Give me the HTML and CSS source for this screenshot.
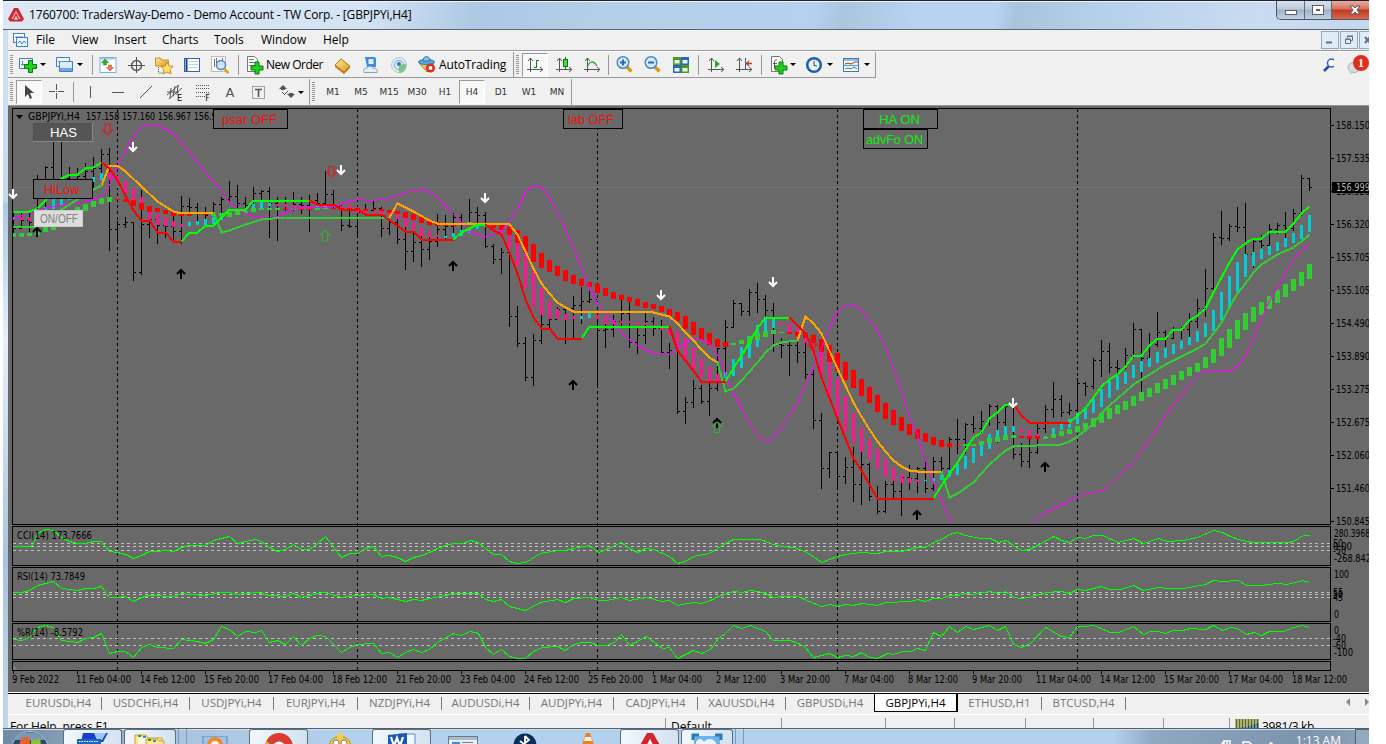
FILE: index.html
```
<!DOCTYPE html>
<html lang="en">
<head>
    <meta charset="UTF-8">
    <title>1760700: TradersWay-Demo - Demo Account - TW Corp. - [GBPJPYi,H4]</title>
    <link rel="stylesheet" href="styles.css">
</head>
<body>
    <svg class="defs" width="0" height="0">
        <defs>
            <g id="axes"><path d="M4.500 2v14M1 13.500h15M2 5l2.500-3L7 5M14 11l3 2.500-3 2.500" fill="none" stroke="#555"/></g>
            <g id="plus"><path d="M4 0h4v4h4v4H8v4H4V8H0V4h4z" fill="#1fd01f" stroke="#0a7a0a"/></g>
            <g id="sheet"><rect x=".5" y=".5" width="16" height="15" fill="#fff" stroke="#7fb0e4"/><rect x="1" y="1" width="15" height="1.500" fill="#9cc4f0"/></g>
            <linearGradient id="gold" x1="0" y1="0" x2="1" y2="1"><stop offset="0" stop-color="#ffe9a0"/><stop offset="1" stop-color="#d99a1c"/></linearGradient>
        </defs>
    </svg>

    <div class="screen">
        <div class="titlebar">
            <svg class="logo" width="16" height="14"><path d="M6 0h4l6 11-2 2.500H2L0 11z" fill="#d4232d"/><path d="M8 2.500l4.500 8.500h-9z" fill="#f2b8bc"/><path d="M8 5l3 6H5z" fill="#d4232d"/><path d="M8 8l2 3.500H6z" fill="#fff"/></svg>
            <span class="title-text">1760700: TradersWay-Demo - Demo Account - TW Corp. - [GBPJPYi,H4]</span>
            <div class="win-buttons">
                <span class="win min"><i></i></span>
                <span class="win max"><i></i></span>
                <span class="win close"><svg width="12" height="10"><path d="M1 1h3l2 2 2-2h3L8 5l3 4H8L6 7 4 9H1l3-4z" fill="#fff" stroke="#5a5560"/></svg></span>
            </div>
        </div>

        <div class="window">
            <div class="menubar">
                <svg class="menu-icon" width="16" height="15"><rect x=".5" y=".5" width="11" height="9" fill="#fff" stroke="#3f7fc8"/><rect x="3.500" y="4.500" width="11" height="9" fill="#eaf3ff" stroke="#3f7fc8"/><path d="M2 4h8M5 10l2-2 2 3 2-3 2 2" fill="none" stroke="#3f7fc8"/></svg>
                <span class="m-file">File</span><span class="m-view">View</span><span class="m-insert">Insert</span><span class="m-charts">Charts</span><span class="m-tools">Tools</span><span class="m-window">Window</span><span>Help</span>
                <div class="mdi-buttons">
                    <span><svg width="15" height="15"><path d="M4 10.500h6" stroke="#5c7084" stroke-width="2"/></svg></span>
                    <span><svg width="15" height="15"><path d="M6.500 6V4.500h5v4H10M4.500 7.500h5v4h-5zM4 7h6M6 4h6" fill="none" stroke="#5c7084"/></svg></span>
                    <span><svg width="15" height="15"><path d="M5 5l5 6M10 5l-5 6" stroke="#5c7084" stroke-width="2"/></svg></span>
                </div>
            </div>

            <div class="toolbars">
                <div class="toolrow">
                    <div class="group">
                        <i class="grip"></i>
                        <span class="drop"><svg width="20" height="20"><path d="M1.500 3.500h13v10h-13z" fill="#eef5ff" stroke="#3f7fc8"/><path d="M4.500 6v5M3 9.500h8" stroke="#789"/><use href="#plus" x="6.500" y="5.500"/></svg></span>
                        <span class="drop"><svg width="20" height="20"><path d="M1.500 2.500h13v9h-13z" fill="#eef5ff" stroke="#3f7fc8"/><path d="M4.500 6.500h13v10h-13z" fill="#dcebfc" stroke="#3f7fc8"/><path d="M5 14.500h12" stroke="#6fa4e0" stroke-width="3"/><path d="M3 6.500h9" stroke="#789"/></svg></span>
                        <i class="sep s4"></i>
                        <span class="tool"><svg width="18" height="18"><use href="#sheet" x=".5" y="1"/><path d="M6 3l3.500 3.500h-2V9h-3V6.500h-2z" fill="#2bb52b" stroke="#1a7a1a" stroke-width=".5"/><path d="M11 15l-3.500-3.500h2V9h3v2.500h2z" fill="#f07a4c" stroke="#b8401c" stroke-width=".5"/></svg></span>
                        <span class="tool"><svg width="18" height="18"><circle cx="9.500" cy="9.500" r="5" fill="none" stroke="#555" stroke-width="1.400"/><path d="M9.500 1v16M1 9.500h17" stroke="#555"/></svg></span>
                        <span class="tool"><svg width="20" height="20"><path d="M1.500 3h5l1 2h7v6h-13z" fill="url(#gold)" stroke="#c9962a"/><path d="M4.500 12v6h5" fill="none" stroke="#555" stroke-dasharray="1 1"/><path d="M13 7l2 4 4 .5-3 3 1 4.500-4-2-4 2 1-4.500-3-3 4-.5z" fill="#ffe16b" stroke="#c98a1a"/></svg></span>
                        <span class="tool"><svg width="18" height="18"><rect x="1.500" y="2.500" width="15" height="13" fill="#fff" stroke="#2a66b8"/><path d="M3.500 3v12" stroke="#1a3f8a" stroke-width="2"/><path d="M6 5.500h9M6 8.500h9M6 11.500h9" stroke="#bcd3ee"/></svg></span>
                        <span class="tool"><svg width="20" height="20"><path d="M1.500 1.500h14v15h-14z" fill="#fafafa" stroke="#bbb"/><path d="M4.500 4v8M6.500 3v8M9.500 5v6M12.500 3v8" stroke="#777"/><circle cx="11" cy="10" r="4.500" fill="#cfe6fa" fill-opacity=".85" stroke="#4a86c8" stroke-width="1.500"/><path d="M14 13.500l4.500 4.500" stroke="#d9a020" stroke-width="2.500"/></svg></span>
                        <i class="sep s8"></i>
                        <span class="tool labeled neworder"><svg width="20" height="20"><path d="M2.500 1.500h7l3 3v12h-10z" fill="#fff" stroke="#777"/><path d="M4 4.500h5M4 7.500h6M4 10.500h6" stroke="#777"/><use href="#plus" x="6" y="7"/></svg><b>New Order</b></span>
                        <span class="tool"><svg width="20" height="18"><path d="M2 9l6-6 9 7-6 6z" fill="url(#gold)" stroke="#b07a14"/><path d="M2 9v2l9 7 6-6v-2l-6 6z" fill="#b8801a"/></svg></span>
                        <span class="tool"><svg width="20" height="18"><path d="M4 1h9l2 1v9H6z" fill="#3a8ce0"/><path d="M7.500 3h5v5h-5z" fill="#d9edff"/><path d="M3 16.500c-1.500-3 1-5 3-4 1-3 5-3 6 0 3-1 5 2 4 4z" fill="#e6eef8" stroke="#8aa0bc"/></svg></span>
                        <span class="tool"><svg width="18" height="18"><circle cx="9" cy="9" r="7.500" fill="#dcecf4" stroke="#b4c8d4"/><circle cx="9" cy="9" r="4.500" fill="none" stroke="#7aa8c8"/><circle cx="9" cy="8" r="2" fill="#3878b8"/><path d="M9 9v8c5 0 8-4 7-9" fill="#49b449" fill-opacity=".6"/></svg></span>
                        <span class="tool labeled autotrade"><svg width="20" height="20"><path d="M2 8l8 9 7-9z" fill="#f0c24a" stroke="#b8861c"/><ellipse cx="9.500" cy="7" rx="8" ry="2.500" fill="#58a8dc" stroke="#2a78b0"/><path d="M6 6c0-6 7-6 7 0z" fill="#7cc0ec" stroke="#2a78b0"/><circle cx="13.500" cy="13" r="4.500" fill="#dc2d1c"/><rect x="11.800" y="11.300" width="3.400" height="3.400" fill="#fff"/></svg><b>AutoTrading</b></span>
                    </div>
                    <div class="group">
                        <i class="grip"></i>
                        <span class="tool pressed"><svg width="18" height="18"><use href="#axes"/><path d="M10.500 4v8M8 11.500h2.500M10.500 4.500H13" fill="none" stroke="#1a7a1a"/></svg></span>
                        <span class="tool"><svg width="18" height="18"><use href="#axes"/><path d="M10.500 1v12" stroke="#0a7a0a"/><rect x="8.500" y="3.500" width="4" height="7" fill="#3fdc3f" stroke="#0a7a0a"/></svg></span>
                        <span class="tool"><svg width="18" height="18"><use href="#axes"/><path d="M4 11c3-6 6-7 10-1" fill="none" stroke="#1a9a1a" stroke-width="1.200"/></svg></span>
                        <i class="sep s5"></i>
                        <span class="tool"><svg width="20" height="20"><path d="M11.500 11.500l5 5" stroke="#d4a010" stroke-width="3.500"/><circle cx="8" cy="7.500" r="5.800" fill="#d4ebfa" stroke="#4a8ac8" stroke-width="1.500"/><path d="M5 7.500h6M8 4.500v6" stroke="#2a6ab0" stroke-width="2"/></svg></span>
                        <span class="tool"><svg width="20" height="20"><path d="M11.500 11.500l5 5" stroke="#d4a010" stroke-width="3.500"/><circle cx="8" cy="7.500" r="5.800" fill="#d4ebfa" stroke="#4a8ac8" stroke-width="1.500"/><path d="M5 7.500h6" stroke="#2a6ab0" stroke-width="2"/></svg></span>
                        <span class="tool"><svg width="18" height="18"><path d="M1 1h8v8H1zM9 9h8v8H9z" fill="#4c9a1a"/><path d="M9 1h8v8H9zM1 9h8v8H1z" fill="#2a60c8"/><path d="M2.500 4h5v3.500h-5zM10.500 4h5v3.500h-5zM2.500 12h5v3.500h-5zM10.500 12h5v3.500h-5z" fill="#eef6ee"/></svg></span>
                        <i class="sep s7"></i>
                        <span class="tool"><svg width="18" height="18"><use href="#axes"/><path d="M8 4l5 4-5 4z" fill="#1fae1f"/></svg></span>
                        <span class="tool"><svg width="18" height="18"><use href="#axes"/><path d="M10.500 2v11" stroke="#2a60a8"/><path d="M17 7.500h-5M14 5l-2.500 2.500L14 10" fill="none" stroke="#c0391a" stroke-width="1.300"/></svg></span>
                        <i class="sep s6"></i>
                        <span class="drop wide"><svg width="20" height="20"><path d="M3.500 1.500h8l3 3v12h-11z" fill="#fff" stroke="#777"/><path d="M9 5c-2-1-2.500 1-2.500 3v5M5 8.500h4" fill="none" stroke="#555"/><use href="#plus" x="7" y="7"/></svg></span>
                        <span class="drop wide"><svg width="18" height="18"><circle cx="9" cy="9" r="6.800" fill="#eaf4ff" stroke="#1a62b8" stroke-width="2.600"/><path d="M9 5v4.500l3 .5" fill="none" stroke="#345"/></svg></span>
                        <span class="drop wide"><svg width="18" height="18"><rect x="1.500" y="2.500" width="15" height="13" fill="#fff" stroke="#3a76bc"/><path d="M2 4h14M2 9.500h14" stroke="#6ea4dc" stroke-width="1.500"/><path d="M3 8l3-1 3 1 4-2h3" fill="none" stroke="#a03020"/><path d="M3 13l3-1 3 1 3-2 3 2" fill="none" stroke="#2a8a2a"/></svg></span>
                    </div>
                    <div class="corner">
                        <svg width="14" height="14"><path d="M6 8l-5 5" stroke="#2048b0" stroke-width="2.500"/><circle cx="8.500" cy="5" r="4" fill="#fff" stroke="#2c5fd0" stroke-width="1.500"/></svg>
                        <span class="chat"><svg width="22" height="20"><ellipse cx="7" cy="12.500" rx="6" ry="5" fill="#ddd" stroke="#aaa"/><path d="M3 16v3.500l4-2.500z" fill="#ccc"/><circle cx="14" cy="8" r="8" fill="#df2f1c"/></svg><em>1</em></span>
                    </div>
                </div>
                <div class="toolrow second">
                    <div class="group">
                        <i class="grip"></i>
                        <span class="tool pressed cursor"><svg width="14" height="18"><path d="M3 2v12l3-3 2 5 2-1-2-5h4z" fill="#444"/></svg></span>
                        <span class="tool narrow"><svg width="18" height="18"><path d="M8.500 1v6M8.500 10v6M1 8.500h6M10 8.500h6" stroke="#555"/><path d="M8 8h1v1H8z" fill="#555"/></svg></span>
                        <i class="sep s6"></i>
                        <span class="tool"><svg width="18" height="18"><path d="M9.500 3v12" stroke="#555"/></svg></span>
                        <span class="tool"><svg width="18" height="18"><path d="M3 9.500h12" stroke="#555"/></svg></span>
                        <span class="tool"><svg width="18" height="18"><path d="M3 15L15 3" stroke="#555"/></svg></span>
                        <span class="tool"><svg width="18" height="18"><path d="M1 12L13 2M3 16L16 5M5 5L4 15M9 3L7 13M12 2l-1 10M1 9h12" stroke="#555"/></svg><sub>E</sub></span>
                        <span class="tool"><svg width="18" height="18"><path d="M2 2.500h14M2 5.500h14M2 9.500h14M2 13.500h9" stroke="#555" stroke-dasharray="1 1"/></svg><sub>F</sub></span>
                        <span class="tool letter">A</span>
                        <span class="tool"><svg width="18" height="18"><rect x="3.500" y="3.500" width="12" height="12" fill="none" stroke="#555" stroke-dasharray="1 1"/><path d="M6 6.500h7M9.500 6v8" stroke="#555" stroke-width="1.600"/></svg></span>
                        <span class="drop last"><svg width="18" height="18"><path d="M5 2l4 4-2 0v1H3V6H1zM13 15l-4-4h2v-1h4v1h2z" fill="#555"/><path d="M4 9l3 3M6 12l4-4" stroke="#555"/></svg></span>
                    </div>
                    <div class="group frames">
                        <i class="grip"></i>
                        <span>M1</span><span>M5</span><span>M15</span><span>M30</span><span>H1</span><span class="pressed">H4</span><span>D1</span><span>W1</span><span>MN</span>
                    </div>
                </div>
            </div>

            <svg id="chart" class="chart" viewBox="8 105 1361 587" width="1361" height="587"></svg>

            <div class="tabs">
                <span class="t93">EURUSDi,H4</span><span class="t88">USDCHFi,H4</span><span>USDJPYi,H4</span><span>EURJPYi,H4</span><span>NZDJPYi,H4</span><span class="t88">AUDUSDi,H4</span><span>AUDJPYi,H4</span><span>CADJPYi,H4</span><span class="t88">XAUUSDi,H4</span><span class="t88 before">GBPUSDi,H4</span><span class="active">GBPJPYi,H4</span><span>ETHUSD,H1</span><span>BTCUSD,H4</span>
                <div class="tab-arrows"><i class="left"></i><i class="right"></i></div>
            </div>

            <div class="status">
                <span class="help">For Help, press F1</span>
                <span class="profile">Default</span>
                <span class="c104"></span><span class="c69"></span><span class="c71"></span><span class="c68"></span><span class="c70"></span><span class="c66"></span>
                <span class="traffic"><svg width="24" height="12"><path d="M1.500 0v10M4.500 0v9M7.500 0v8M10.500 0v8M13.500 0v7M16.500 0v6M19.500 0v5M22.500 0v4" stroke="#5f7010" stroke-width="2"/><path d="M7.500 8v4M10.500 8v4M13.500 7v5M16.500 6v6M19.500 5v7M22.500 4v8" stroke="#10405c" stroke-width="2"/></svg>3981/3 kb</span>
            </div>
        </div>

        <div class="taskbar">
            <div class="start"><svg width="44" height="16"><circle cx="22" cy="21" r="18.500" fill="#2c4a68" stroke="#a8c4dc"/><path d="M7 11c5-10 25-10 30 0z" fill="#7c98b0"/><path d="M13 10c4-3 7-2 9 0v6H11z" fill="#e8602c"/><path d="M23 10c3 2 6 1 9-1l1 7H23z" fill="#8cc03c"/></svg></div>
            <div class="task open w59"><svg width="34" height="12"><path d="M7 0h25l-5 9H5z" fill="#1a3fd0"/><path d="M18 0h12l-4 7h-5z" fill="#9cc8ff"/><rect x="1" y="6" width="24" height="8" fill="#1a66c0"/><path d="M3 8.500h20M3 11.500h20" stroke="#fff" stroke-dasharray="1.500 1"/></svg></div>
            <div class="task open w52"><svg width="34" height="12"><path d="M2 2h11l2 3h14v9H2z" fill="#ffe690" stroke="#caa030"/><path d="M5 4h9v8H5z" fill="#fffbe0"/><path d="M13 6h11l2 2h5v6H13z" fill="#ffe690" stroke="#caa030"/><path d="M5 3h3M15 7h3" stroke="#2a9a2a" stroke-width="2"/><path d="M10 4h3M20 8h3" stroke="#3a86d8" stroke-width="2"/></svg></div>
            <div class="task stack"></div>
            <div class="task w66 low"><svg width="28" height="8"><rect x="1" y="0" width="24" height="12" fill="#9cc4e8" stroke="#5a8ab8"/><circle cx="13" cy="9" r="8" fill="#f08a2c"/><circle cx="13" cy="9" r="4" fill="#fff"/></svg></div>
            <div class="task open w59"><svg width="32" height="12"><circle cx="16" cy="15" r="14" fill="#f2c41c"/><path d="M2 14A14 14 0 0 1 30 14H16L9 15 4 8z" fill="#dc3c30"/><path d="M2 15l5-6 6 6z" fill="#30a050"/><circle cx="16" cy="15" r="6.500" fill="#fff"/></svg></div>
            <div class="task w65"><svg width="26" height="12"><path d="M2 14c0-14 22-14 22 0z" fill="#f0c83c" stroke="#b88a1c"/><circle cx="13" cy="3" r="3" fill="#f4d04c"/><circle cx="9" cy="10" r="3" fill="#fff" stroke="#876"/><circle cx="17" cy="10" r="3" fill="#fff" stroke="#876"/><path d="M11 11h4l-2 2z" fill="#d86020"/></svg></div>
            <div class="task open w59"><svg width="32" height="12"><path d="M13 1h16v13H13z" fill="#f4f9ff" stroke="#5a8cc8"/><path d="M2 2l19-2v14H2z" fill="#1a58b8"/><path d="M5 4l3 9 3-8 3 8 3-9" fill="none" stroke="#fff" stroke-width="2.200"/></svg></div>
            <div class="task w65 low"><svg width="30" height="10"><rect x=".5" y=".5" width="29" height="12" fill="#e8eef4" stroke="#6a7a8a"/><path d="M1 2.500h28" stroke="#a8bccc" stroke-width="3"/><path d="M4 6h8v4H4z" fill="#4a8ac8"/><path d="M14 6.500h11M14 9.500h11" stroke="#778"/></svg></div>
            <div class="task w60"><svg width="24" height="12"><circle cx="12" cy="12" r="11.500" fill="#0a2c5c"/><path d="M7 8l9 7M12 3v11M12 3l4 4-9 7" fill="none" stroke="#fff" stroke-width="1.800"/></svg></div>
            <div class="task w64"><svg width="16" height="12"><path d="M6 0h4l4 12H2z" fill="#f08018"/><path d="M5 4h6l1 4H4z" fill="#f4f4f4"/></svg></div>
            <div class="task open w59"><svg width="24" height="12"><path d="M9 0h6l8 14h-7l-4-8-4 8H1z" fill="#d4232d"/><path d="M12 6l4 8H8z" fill="#fff"/></svg></div>
            <div class="task open w52"><svg width="32" height="12"><rect x="3" y="3" width="26" height="12" fill="#6cb4f0"/><path d="M5 9c3-5 7-3 8 0 4-5 10-3 12 1v4H5z" fill="#e8f4ff"/><path d="M2 7V2h6M24 2h6v5" fill="none" stroke="#2a7ab8" stroke-width="3"/></svg></div>
            <div class="task stack"></div>
            <div class="tray"><svg width="60" height="9"><path d="M3 8l4-6h6v6M7 3v6M10 3v6M26 3h6l3 3h7v3H27z" fill="none" stroke="#fff" stroke-width="1.500"/><path d="M54 3v6M52 5h4" stroke="#fff" stroke-width="1.500"/></svg><span>1:13 AM</span><i></i></div>
        </div>
    </div>
    <script src="script.js"></script>
</body>
</html>
```
FILE: styles.css
```
body {
    margin: 0;
    background: #fff;
    font-family: 'Open Sans', 'Noto Sans', sans-serif;
    font-size: 12px;
    color: #000;
}
.defs {
    position: absolute;
}
.screen {
    width: 1366px;
    height: 744px;
    margin-left: 3px;
    overflow: hidden;
    background: linear-gradient(#cfe0f1 0, #cfe0f1 90px, #c3d8ee 200px, #a9cbea 205px, #e8f0f8 340px, #a8c4e0 560px, #c4d8ec 100%);
}
.titlebar {
    display: flex;
    box-sizing: border-box;
    height: 30px;
    border-top: 1px solid #1c2330;
    border-bottom: 1px solid #5c6670;
    background: linear-gradient(100deg, #dce8f4 0, #d3e3f3 360px, #adc8e4 470px, #b3cfea 600px, #b5d1ed 800px, #a9c5e0 830px, #b7d3ef 900px, #b7d3ef 980px, #a8c3de 1000px, #b5d0eb 1080px, #c9dbf0 1240px, #c4d8ee 100%);
    box-shadow: inset 0 1px #eef5fc;
}
.logo {
    margin: 7px 5px 0;
}
.title-text {
    line-height: 28px;
    letter-spacing: -.155px;
    white-space: nowrap;
}
.win-buttons {
    display: flex;
    box-sizing: border-box;
    width: 93px;
    height: 19px;
    margin-left: auto;
    border: solid #47566a;
    border-width: 0 0 1px 1px;
    border-radius: 0 0 0 5px;
    overflow: hidden;
}
.win {
    display: flex;
    box-sizing: border-box;
    flex: none;
    width: 28px;
    align-items: center;
    justify-content: center;
    border-right: 1px solid #5c6b80;
    background: linear-gradient(#d8e2ee, #bccad9 45%, #9fb0c3 50%, #c2d2e2);
}
.win.max {
    width: 27px;
}
.win.close {
    width: 46px;
    border: 0;
    background: linear-gradient(#e8aca0, #d5705c 45%, #bd3a22 50%, #d8684c);
}
.win.min i {
    width: 10px;
    height: 3px;
    margin-top: 5px;
    border: 1px solid #5a5f70;
    background: #fff;
}
.win.max i {
    width: 4px;
    height: 2px;
    border: 3px solid #fff;
    outline: 1px solid #5a5f70;
    background: #5a5f70;
}
.window {
    width: 1361px;
    margin-left: 5px;
    background: #f0f0f0;
}
.menubar {
    display: flex;
    box-sizing: border-box;
    height: 21px;
    border-bottom: 1px solid #999;
    line-height: 20px;
}
.menu-icon {
    margin: 3px 7px 0 5px;
}
.m-file { width: 36px; }
.m-view { width: 42px; }
.m-insert { width: 48px; }
.m-charts { width: 52px; }
.m-tools { width: 47px; }
.m-window { width: 62px; }
.mdi-buttons {
    display: flex;
    gap: 1px;
    width: 48px;
    margin: 1px 0 0 auto;
    overflow: hidden;
}
.mdi-buttons span {
    flex: none;
    width: 16px;
    height: 16px;
    border: 1px solid #93a7bb;
    background: #dfebf7;
    line-height: 0;
}
.toolbars {
    height: 54px;
    border-top: 1px solid #fff;
    box-sizing: border-box;
}
.toolrow {
    display: flex;
    height: 27px;
}
.toolrow.second {
    height: 26px;
}
.group {
    display: flex;
    align-items: center;
    box-sizing: border-box;
    height: 26px;
    border-right: 1px solid #999;
    border-bottom: 1px solid #999;
}
.second .group {
    border-bottom: 0;
}
.grip {
    width: 3px;
    height: 20px;
    margin: 0 3px 0 2px;
    background: repeating-linear-gradient(#999 0, #999 1px, #f0f0f0 1px, #f0f0f0 2px);
}
.tool, .drop, .frames span {
    display: flex;
    box-sizing: border-box;
    width: 28px;
    height: 24px;
    align-items: center;
    justify-content: center;
}
.tool.narrow {
    width: 26px;
}
.tool.pressed, .frames .pressed {
    width: 26px;
    margin-right: 2px;
    border: 1px solid #999;
    border-right-color: #fff;
    border-bottom-color: #fff;
    background: #f8f8f8;
}
.tool sub {
    margin: 12px 0 0 -7px;
    font: 8px 'DejaVu Sans', sans-serif;
}
.tool.letter {
    color: #555;
    font: 13px 'DejaVu Sans', sans-serif;
}
.labeled {
    justify-content: flex-start;
}
.labeled b {
    font-weight: normal;
    white-space: nowrap;
}
.neworder {
    width: 87px;
    padding-left: 3px;
    letter-spacing: -.5px;
}
.autotrade {
    width: 100px;
    padding-left: 4px;
    letter-spacing: -.15px;
}
.autotrade svg, .neworder svg {
    flex: none;
    margin-right: 1px;
}
.autotrade svg {
    margin-right: 2px;
}
.drop {
    width: 37px;
    padding-left: 2px;
    justify-content: flex-start;
}
.drop.wide {
    padding-left: 4px;
}
.drop.wide svg {
    width: 20px;
}
.drop.last {
    padding-left: 6px;
}
.drop::after {
    content: '';
    margin-left: 2px;
    border: 3px solid transparent;
    border-top-color: #000;
    border-bottom: 0;
}
.sep {
    height: 20px;
    background: linear-gradient(#999, #999) center / 1px 100% no-repeat;
}
.s4 { width: 4px; }
.s5 { width: 5px; }
.s6 { width: 6px; }
.s7 { width: 7px; }
.s8 { width: 8px; }
.frames {
    color: #333;
    font: 9px 'DejaVu Sans', sans-serif;
}
.frames .grip {
    margin-right: 4px;
}
.corner {
    display: flex;
    gap: 12px;
    width: 46px;
    margin: 6px 0 0 auto;
}
.chat {
    position: relative;
    flex: none;
    margin: -3px 0 0 1px;
}
.chat em {
    position: absolute;
    left: 11px;
    top: 1px;
    color: #fff;
    font: bold 12px 'Liberation Serif', serif;
}
.chart {
    display: block;
    background: #696969;
    box-shadow: inset 0 1px #999;
    font-family: 'DejaVu Sans Condensed', 'DejaVu Sans', sans-serif;
    font-size: 10px;
}
.chart .button-text {
    font-family: 'Liberation Sans', sans-serif;
}
.tabs {
    display: flex;
    box-sizing: border-box;
    height: 22px;
    padding-left: 1px;
    border-top: 1px solid #fff;
    box-shadow: inset 0 1px #000;
    color: #777;
}
.tabs > span {
    box-sizing: border-box;
    flex: none;
    width: 84px;
    height: 13px;
    margin-top: 4px;
    border-right: 1px solid #777;
    line-height: 12px;
    text-align: center;
    font-size: 11.500px;
}
.tabs > .t93 {
    width: 93px;
    padding-left: 7px;
}
.tabs > .t88 { width: 88px; }
.tabs > .before {
    border: 0;
}
.tabs > .active {
    height: 19px;
    margin-top: 0;
    padding-top: 3px;
    border: 1px solid #000;
    border-right-width: 2px;
    background: #fff;
    color: #000;
}
.tab-arrows {
    display: flex;
    gap: 15px;
    align-items: flex-start;
    margin: 5px 0 0 auto;
}
.tab-arrows i {
    border: 4px solid transparent;
}
.tab-arrows .left {
    border-left: 0;
    border-right-color: #888;
}
.tab-arrows .right {
    border-right: 0;
    border-left-color: #888;
}
.status {
    display: flex;
    height: 13px;
    border-top: 1px solid #fff;
    overflow: hidden;
    line-height: 24px;
}
.status span {
    box-sizing: border-box;
    height: 24px;
    background: linear-gradient(#999, #999) right 3px / 1px 100% no-repeat;
}
.status .help {
    width: 658px;
    padding-left: 2px;
    letter-spacing: -.1px;
}
.status .profile { width: 116px; padding-left: 5px; }
.status .c104 { width: 104px; }
.status .c69 { width: 69px; }
.status .c71 { width: 71px; }
.status .c68 { width: 68px; }
.status .c70 { width: 70px; }
.status .c66 { width: 66px; }
.status .traffic {
    display: flex;
    gap: 3px;
    padding-left: 5px;
    background: none;
    letter-spacing: -.4px;
}
.traffic svg {
    margin-top: 4px;
}
.taskbar {
    display: flex;
    box-sizing: border-box;
    height: 16px;
    border-top: 1px solid #52606e;
    background: linear-gradient(90deg, #6f8aa3 0, #859db3 60px, #a9c4de 180px, #b3d0ec 340px, #b3d0ec 1110px, #8fa9c2 1150px, #7b93ab 1300px, #8ba2b8 100%);
    box-shadow: inset 0 1px #cfe0f0;
}
.start {
    width: 60px;
    padding-left: 5px;
    box-sizing: border-box;
}
.task {
    display: flex;
    box-sizing: border-box;
    flex: none;
    height: 16px;
    margin-right: 2px;
    justify-content: center;
    padding-top: 4px;
}
.task.low {
    padding-top: 7px;
}
.task.open {
    padding-top: 3px;
    border: 1px solid #5a7088;
    border-bottom: 0;
    border-radius: 3px 3px 0 0;
    background: linear-gradient(90deg, #f2f7fc, #d3e2f0);
}
.task.stack {
    width: 9px;
    border: solid #8098b0;
    border-width: 0 1px;
}
.w52 { width: 52px; }
.w59 { width: 59px; }
.w60 { width: 60px; }
.w64 { width: 61px; }
.w65 { width: 60px; }
.w66 { width: 58px; padding-right: 4px; }
.tray {
    display: flex;
    gap: 19px;
    margin-left: auto;
    padding-top: 4px;
    color: #fff;
    line-height: 15px;
    white-space: nowrap;
}
.tray svg {
    margin-top: 6px;
}
.tray i {
    width: 13px;
    height: 16px;
    margin: -4px 0 0 -5px;
    border: 1px solid #4f6478;
    border-right: 0;
    background: #93a9be;
}
```
FILE: script.js
```
const NS = 'http://www.w3.org/2000/svg';
const chart = document.getElementById('chart');
const STEP = 8;
const FIRST = 13;

function el(name, attrs, text) {
    const node = document.createElementNS(NS, name);
    for (const key in attrs) node.setAttribute(key, attrs[key]);
    if (text !== undefined) node.textContent = text;
    chart.appendChild(node);
    return node;
}
function rect(x, y, w, h, fill) {
    el('rect', { x: x, y: y, width: w, height: h, fill: fill, 'shape-rendering': 'crispEdges' });
}
function frame(x, y, w, h, fill, stroke) {
    el('rect', { x: x + .5, y: y + .5, width: w, height: h, fill: fill, stroke: stroke, 'shape-rendering': 'crispEdges' });
}
function line(points, color, width) {
    el('polyline', { points: points, fill: 'none', stroke: color, 'stroke-width': width, 'shape-rendering': 'crispEdges', transform: 'translate(.5 .5)' });
}
function dashed(d, color) {
    el('path', { d: d, stroke: color, 'stroke-dasharray': '3 3', 'shape-rendering': 'crispEdges' });
}
function text(x, y, value, fill, width, cls, size) {
    const attrs = { x: x, y: y, fill: fill };
    if (width) { attrs.textLength = width; attrs.lengthAdjust = 'spacingAndGlyphs'; }
    if (cls) attrs.class = cls;
    if (size) attrs['font-size'] = size;
    el('text', attrs, value);
}

// high low close
const bars = `213 232 228,213 228 220,213 231 222,175 223 195,166 210 167,141 208 180,141 205 178,167 187 175,168 190 176,163 185 171,
157 187 168,149 178 154,148 250 229,221 240 224,217 227 222,222 280 272,190 274 224,207 237 219,217 243 225,222 237 226,
213 242 231,196 243 206,198 215 207,203 220 213,207 222 215,202 215 204,197 213 199,181 200 196,185 210 203,197 213 205,
187 210 193,190 203 191,187 237 203,197 240 200,197 210 200,192 210 204,197 213 205,195 231 200,193 208 203,171 208 194,
190 207 206,205 230 225,208 227 226,210 237 212,204 215 210,200 212 208,207 236 228,215 234 222,217 243 239,222 269 251,
231 261 242,228 266 249,233 259 241,214 246 229,215 239 226,213 235 217,214 230 224,199 223 212,207 227 215,212 247 246,
244 263 259,248 273 252,252 326 316,306 346 343,337 380 377,334 385 340,302 343 324,313 327 319,307 317 309,308 343 308,
296 337 305,287 323 301,291 302 299,320 385 330,323 347 329,315 336 321,299 327 313,302 347 342,326 353 335,313 343 321,
317 335 328,320 353 352,343 368 350,350 413 411,397 423 402,380 407 388,385 403 401,383 415 388,348 390 348,320 372 327,
300 327 303,303 315 311,289 315 292,283 312 299,295 315 310,303 351 344,338 357 345,342 375 345,342 362 352,343 378 374,
370 428 420,413 488 468,452 477 452,452 487 476,457 483 467,447 501 484,452 504 464,463 500 496,486 513 511,481 512 484,
481 498 491,477 515 477,465 489 478,467 492 468,460 492 488,457 490 461,457 470 468,437 470 439,419 453 439,423 453 424,
416 432 428,411 433 421,404 425 406,405 442 422,407 425 406,405 458 454,443 466 461,437 467 452,422 453 428,405 432 409,
382 417 399,395 416 412,403 414 410,378 411 383,382 395 386,358 388 360,340 376 351,343 372 367,360 373 368,348 368 355,
323 357 329,329 393 358,333 360 344,312 346 332,330 346 338,327 338 330,327 338 329,313 337 321,299 327 308,269 316 288,
233 290 237,211 244 238,224 240 226,207 231 227,203 255 254,240 267 241,235 247 245,224 246 229,223 233 225,212 237 228,
209 230 213,175 215 178,178 190 187`;

// thin bodies: top bottom, c = rising, p = falling
const thin = `c217 219,p217 220,p217 221,c215 218,c207 211,c198 209,c197 205,c185 200,c183 195,c180 190,c177 182,c173 180,p172 180,p176 184,p181 193,
p188 200,p197 210,p209 222,p214 225,p217 226,p221 227,p224 227,c222 226,c221 225,c219 225,c217 224,c215 220,c212 215,c209 213,c209 212,
c204 209,c202 208,c203 206,p204 206,p204 207,p205 210,p206 209,p206 210,c206 208,c205 207,p205 207,p206 209,p205 208,p207 213,p209 213,
p211 213,p210 215,p213 216,p213 219,p217 227,p222 230,p227 236,p231 237,p235 237,c236 238,c233 237,c230 236,c228 233,c224 229,c223 227,
p224 227,p227 234,p232 248,p243 266,p253 288,p268 307,p288 315,p301 319,p309 319,p314 320,p316 319,c316 319,c312 318,p315 319,p317 324,
p320 324,p321 323,p321 323,p322 325,p323 325,p325 327,p327 330,p328 335,p331 348,p338 359,p348 371,p359 377,p367 381,p374 381,c372 378,
c359 376,c347 368,c343 358,c325 347,c319 333,c319 328,p323 325,p323 332,p328 337,p335 343,p345 355,p352 375,p362 396,p378 416,p396 431,
p413 443,p428 452,p439 459,p449 469,p459 477,p467 481,p474 483,p478 483,p480 482,c480 481,c478 481,c475 480,c470 477,c464 475,c456 469,
c448 463,c445 456,c434 449,c430 442,c426 435,c426 432,p429 433,p430 437,p434 437,c436 438,c428 435,c423 430,c419 428,c413 424,c407 419,
c399 413,c389 407,c381 398,c376 390,c372 384,c365 378,c361 372,c358 367,c352 363,c348 358,c344 354,c341 349,c337 345,c331 342,c323 337,
c310 331,c292 320,c276 307,c262 292,c254 277,c252 266,c249 259,c246 255,c242 251,c238 247,c233 243,c225 239,c215 232`;

// wide bodies: top bottom, g = rising, r = falling
const wide = `g233 237,g233 237,g233 236,g230 235,g227 232,g222 230,g217 225,g213 222,g207 213,g204 211,g201 207,g198 204,g197 202,r199 200,r199 202,
r200 206,r203 210,r206 212,r208 212,r210 214,r212 216,r213 216,r214 216,r213 214,r214 215,g214 216,g213 216,g212 217,g211 215,g211 213,
g208 212,g208 210,g208 210,g208 210,r209 210,g208 210,r209 210,r209 210,g207 210,g207 209,r208 209,r208 210,r208 209,r208 210,r209 211,
r209 210,r209 211,r210 213,r211 214,r212 218,r214 220,r217 223,r220 225,r222 226,r223 226,r223 226,g223 225,g222 225,g223 225,r223 226,
r224 228,r225 230,r227 235,r230 243,r236 252,r244 262,r253 268,r260 272,r266 276,r270 281,r275 284,r279 286,r282 287,r284 293,r288 296,
r292 299,r295 300,r297 302,r299 306,r302 308,r304 309,r306 312,r309 316,r312 321,r316 329,r322 335,r328 340,r333 345,r339 347,r342 347,
g343 345,g340 344,g336 344,g333 340,g331 337,g330 334,g332 333,r332 334,r332 336,r333 338,r335 343,r339 352,r345 362,r353 371,r362 380,
r370 388,r379 396,r387 403,r395 412,r403 419,r410 425,r417 431,r424 435,r429 439,r433 442,r437 445,r440 447,r443 447,r445 446,g444 446,
g444 446,g441 445,g438 443,g437 442,g435 440,g435 438,r436 438,r436 439,r436 439,g437 439,g434 438,g431 436,g429 434,g426 432,g423 430,
g418 427,g413 423,g408 419,g405 414,g401 410,g396 406,g392 401,g388 397,g383 393,g379 389,g375 385,g371 380,g367 376,g363 372,g357 368,
g349 363,g338 356,g329 348,g320 339,g313 330,g307 322,g302 315,g296 309,g290 303,g284 297,g279 291,g272 286,g264 279`;

const LIME = '#00ff00', RED = '#ff0000', GREEN = '#32cd32', ORANGE = '#ffa500', MAGENTA = '#ff00ff';

// period separators and the current price
dashed('M117.5 109V670M357.5 109V670M597.5 109V670M837.5 109V670M1077.5 109V670', '#000');
rect(13, 187, 1318, 1, '#6a7580');

let prev = null;
bars.split(',').forEach(function (row, i) {
    const [high, low, close] = row.trim().split(' ').map(Number);
    const x = FIRST + i * STEP;
    rect(x, high, 1, low - high + 1, '#000');
    if (prev !== null) rect(x - 2, prev, 2, 1, '#000');
    rect(x + 1, close, 2, 1, '#000');
    prev = close;
});

function bodies(data, half, colors) {
    data.split(',').forEach(function (row, i) {
        row = row.trim();
        const [top, bottom] = row.slice(1).split(' ').map(Number);
        const x = Math.max(FIRST, FIRST + i * STEP - half);
        rect(x, top, FIRST + i * STEP + half + 1 - x, bottom - top, colors[row[0]]);
    });
}
bodies(thin, 1, { c: '#00ced1', p: '#ff1493' });
bodies(wide, 2, { g: GREEN, r: RED });

line('13,219 21,215 37,209 85,201 101,197 109,185 117,167 125,150 133,136 141,127 149,124 157,125 173,133 189,152 205,172 221,190 229,202 237,208 245,213 253,216 269,218 277,216 293,208 301,207 325,207 333,206 341,203 349,201 357,199 373,200 389,198 405,192 421,189 429,191 437,197 453,214 469,231 477,235 485,236 493,234 501,230 509,221 517,208 525,192 533,185 541,187 549,197 565,228 581,267 589,287 597,303 613,322 621,333 637,345 653,353 669,354 677,349 685,342 693,338 701,339 709,343 717,354 725,373 733,392 741,408 749,423 757,435 765,442 773,437 781,427 789,415 797,402 805,385 813,367 821,348 829,327 837,311 845,305 853,304 861,310 869,319 877,330 885,347 893,367 901,390 909,415 917,435 925,460 933,482 941,500 949,518 952,523', MAGENTA, 1);
line('1033,523 1037,517 1045,512 1053,508 1069,500 1085,493 1101,491 1109,485 1125,469 1133,462 1141,450 1157,427 1173,405 1189,384 1197,376 1205,370 1221,371 1229,370 1237,366 1245,355 1253,338 1261,318 1269,300 1277,287 1285,273 1293,259 1301,250 1309,243', MAGENTA, 1);

line('13,227 37,226 45,222 53,215 61,209 77,199 93,189 101,185', GREEN, 2);
line('101,185 109,165 117,165 125,171 141,186 157,201 173,211 181,213 213,212', ORANGE, 2);
line('213,212 221,232 229,230 245,224 261,219 285,217 389,217', GREEN, 2);
line('389,217 397,203 413,211 429,220 437,223 453,223 501,223 509,224 517,234 533,268 541,283 549,293 557,302 565,307 573,311 621,311 653,312 669,316 677,323 685,332 693,340 701,349 709,357 717,362', ORANGE, 2);
line('717,362 725,391 733,388 741,380 757,362 765,352 773,345 781,342 797,340', GREEN, 2);
line('797,340 805,316 813,323 821,333 837,368 845,385 853,402 861,416 869,429 877,441 885,451 893,460 901,466 909,470 917,471 941,471', ORANGE, 2);
line('941,471 949,497 957,493 973,482 989,464 997,457 1005,450 1013,446 1037,445 1061,444 1069,441 1077,436 1085,430 1093,423 1101,413 1109,405 1117,398 1133,384 1149,374 1165,364 1181,356 1197,348 1205,343 1213,333 1221,322 1229,307 1237,293 1245,283 1253,272 1261,264 1277,254 1293,247 1301,241 1309,234', GREEN, 2);

line('13,211 29,211 37,208 45,200 53,189 61,178 69,174 77,174 85,168 93,167 101,162', LIME, 2);
line('101,162 109,168 117,180 125,195 133,210 141,220 149,220 157,232 165,232 173,241 181,241', RED, 2);
line('181,241 189,232 197,232 205,225 213,225 221,217 229,209 245,209 253,200 309,200', LIME, 2);
line('309,200 317,204 333,204 341,209 357,209 365,214 381,214 405,231 413,231 421,239 453,239', RED, 2);
line('453,239 461,232 469,228 477,224 485,224', LIME, 2);
line('485,224 493,230 501,234 509,252 517,273 525,299 533,317 541,328 549,328 557,338 581,338', RED, 2);
line('581,338 589,326 669,326', LIME, 2);
line('669,326 677,350 685,360 701,381 725,381', RED, 2);
line('725,381 741,355 749,342 757,328 765,317 789,317', LIME, 2);
line('789,317 797,325 805,333 813,350 821,377 837,418 853,458 861,470 877,498 933,498', RED, 2);
line('933,498 941,485 957,462 973,437 981,432 989,418 997,412 1005,404 1013,404', LIME, 2);
line('1013,404 1021,415 1029,422 1069,422', RED, 2);
line('1069,422 1077,415 1085,408 1093,397 1101,386 1109,379 1117,374 1125,366 1133,355 1141,355 1149,345 1157,338 1165,338 1173,329 1181,329 1189,320 1197,315 1205,308 1213,292 1229,262 1237,249 1245,243 1253,238 1261,238 1269,231 1285,231 1293,223 1301,213 1309,206', LIME, 2);

// indicator levels
[543, 546, 550, 592, 594, 597, 638, 645].forEach(function (y) {
    dashed('M13 ' + (y + .5) + 'H1331', '#c0c0c0');
});
// CCI
line('13,546 29,546 32,545 37,533 45,529 53,530 61,537 69,541 77,543 85,543 93,541 101,541 109,551 117,552 125,554 133,558 141,555 149,551 157,551 165,550 173,551 181,547 189,545 205,545 213,540 229,536 237,543 245,541 255,539 261,541 269,547 277,551 285,549 293,544 301,549 309,549 317,543 325,536 333,547 341,557 349,553 357,553 365,548 373,546 381,556 389,555 397,557 405,561 413,557 421,555 429,552 437,548 445,545 453,543 462,543 470,540 478,542 485,548 493,554 501,554 509,561 517,563 525,562 540,553 557,550 565,550 573,548 589,545 598,552 606,549 621,542 629,548 637,552 645,548 653,549 669,556 677,563 685,561 693,556 709,553 725,543 733,539 760,539 773,544 782,546 793,547 807,552 821,562 837,556 845,554 860,552 877,553 885,551 901,551 917,547 925,547 933,542 941,539 949,534 957,532 965,535 980,538 990,538 998,542 1006,540 1013,545 1021,550 1029,549 1037,545 1053,536 1061,540 1069,542 1077,537 1085,538 1093,535 1102,535 1118,542 1133,538 1143,543 1158,538 1167,541 1183,540 1197,537 1213,530 1222,532 1230,536 1238,539 1247,541 1253,542 1287,542 1293,541 1303,535 1309,535', LIME, 1);
// RSI
line('13,592 21,592 29,590 37,585 45,583 53,581 61,588 77,590 85,588 93,588 101,586 109,597 117,597 125,596 133,601 141,597 149,595 173,596 181,593 189,594 205,595 221,592 229,592 237,594 257,592 269,595 285,596 293,593 301,597 317,593 325,592 341,597 357,595 373,594 381,598 389,597 405,601 413,599 421,600 429,598 445,595 453,593 478,593 485,599 493,601 501,599 509,606 525,610 540,602 557,599 565,602 573,598 589,597 598,600 606,600 621,597 629,600 647,597 661,601 669,600 677,605 693,602 701,603 710,600 718,596 733,591 741,592 750,590 763,592 773,597 782,596 797,596 821,606 830,604 837,606 845,604 853,605 861,603 877,605 885,602 910,601 917,599 925,601 933,598 941,598 949,595 957,595 965,593 973,594 989,591 998,593 1005,591 1013,597 1021,598 1029,597 1045,592 1061,591 1069,593 1077,589 1085,590 1101,586 1109,589 1120,589 1133,585 1143,590 1158,587 1167,588 1183,588 1205,584 1213,580 1222,581 1238,580 1246,585 1261,585 1277,583 1287,584 1302,580 1309,582', LIME, 1);
// %R
line('13,639 21,640 29,637 37,627 45,625 53,627 61,640 77,642 85,638 93,637 101,633 109,653 117,651 125,651 133,657 141,647 149,644 157,647 173,648 181,639 197,641 205,643 213,639 221,626 229,629 237,636 245,631 255,632 261,630 269,642 277,640 285,644 293,636 301,645 309,638 317,635 325,636 333,644 341,652 349,647 357,644 373,643 381,653 389,652 397,657 405,652 413,649 421,652 429,649 437,642 453,633 460,635 470,631 478,633 485,647 493,654 501,649 509,656 517,658 525,658 533,651 542,647 557,646 565,650 573,644 582,642 590,642 598,645 606,645 614,642 621,634 629,645 637,641 646,636 662,648 669,647 677,658 693,650 701,653 710,649 718,638 725,633 733,625 741,628 750,625 765,631 773,640 790,640 798,643 805,647 813,657 829,653 837,657 845,655 853,656 861,652 869,657 877,658 887,653 893,654 902,651 910,651 917,648 925,650 933,632 941,636 949,626 957,632 965,626 973,629 989,625 997,630 1005,626 1013,644 1021,647 1030,643 1045,627 1061,636 1069,637 1077,626 1085,626 1093,625 1110,632 1118,632 1133,626 1143,634 1150,631 1158,631 1165,633 1173,630 1182,630 1190,628 1205,629 1213,625 1222,630 1230,627 1237,628 1246,634 1254,632 1261,635 1269,631 1283,631 1293,627 1302,625 1309,627', LIME, 1);

// panel frames
[[108, 416], [526, 39], [567, 54], [623, 36], [661, 9]].forEach(function (p) {
    frame(12, p[0], 1318, p[1], 'none', '#000');
});
el('path', { d: 'M13 665l5 5h-5z', fill: '#708090' });

// signal arrows
function arrow(x, y, up, color) {
    const s = up ? -1 : 1;
    el('path', { d: `M${x} ${y - 5 * s}V${y + 4 * s}M${x - 4} ${y}L${x} ${y + 4 * s}L${x + 4} ${y}`, fill: 'none', stroke: color, 'stroke-width': 2 });
}
function outline(x, y, up, color) {
    const s = up ? -1 : 1;
    el('path', { d: `M${x - 2.5} ${y - 5 * s}h5V${y + s}h2.500L${x} ${y + 5.5 * s}L${x - 5} ${y + s}h2.500z`, fill: 'none', stroke: color, 'stroke-width': 1.2 });
}
[[133, 147], [341, 170], [485, 198], [661, 295], [773, 282], [1013, 403], [13, 194]].forEach(p => arrow(p[0], p[1], false, '#fff'));
[[37, 232], [181, 274], [453, 266], [573, 385], [717, 423], [917, 515], [1045, 467]].forEach(p => arrow(p[0], p[1], true, '#000'));
[[107.5, 129], [331.5, 171.5], [812, 344]].forEach(p => outline(p[0], p[1], false, '#dc1c1c'));
[[325, 236], [717, 427.5]].forEach(p => outline(p[0], p[1], true, '#3fa83f'));

// price scale
const prices = ['158.150', '157.535', '156.920', '156.320', '155.705', '155.105', '154.490', '153.890', '153.275', '152.675', '152.060', '151.460', '150.845'];
prices.forEach(function (p, i) {
    const y = 125 + i * 33;
    rect(1331, y, 3, 1, '#000');
    text(1336, y + 4, p, '#000', 34);
});
rect(1332, 182, 40, 11, '#000');
text(1336, 191, '156.999', '#b0b0b0', 34);
[['280.3968', 537, 36], ['-268.842', 562, 37], ['100', 578, 15], ['0', 618, 5], ['0', 634, 5], ['-100', 656, 19]].forEach(function (r) {
    text(1334, r[1], r[0], '#000', r[2]);
});
[['50', 547, 10], ['0.00', 550, 19], ['-50', 554, 13], ['55', 596, 10], ['50', 598, 10], ['45', 601, 10], ['-40', 642, 13], ['-60', 649, 13]].forEach(function (r) {
    text(1333, r[1], r[0], '#000', r[2]);
});

// time scale
const dates = ['9 Feb 2022', '11 Feb 04:00', '14 Feb 12:00', '15 Feb 20:00', '17 Feb 04:00', '18 Feb 12:00', '21 Feb 20:00', '23 Feb 04:00', '24 Feb 12:00', '25 Feb 20:00', '1 Mar 04:00', '2 Mar 12:00', '3 Mar 20:00', '7 Mar 04:00', '8 Mar 12:00', '9 Mar 20:00', '11 Mar 04:00', '14 Mar 12:00', '15 Mar 20:00', '17 Mar 04:00', '18 Mar 12:00'];
dates.forEach(function (d, i) {
    const x = FIRST + i * 64;
    rect(x, 671, 1, 3, '#000');
    text(x - 1, 683, d, '#000', d.length === 12 ? 55 : d.length === 11 ? 50 : 47);
});

// captions
el('path', { d: 'M16 115h7l-3.500 4z', fill: '#000' });
text(28, 120, 'GBPJPYi,H4', '#000', 52);
text(86, 120, '157.158 157.160 156.967 156.999', '#000', 141);
text(17, 539, 'CCI(14) 173.7666', '#000', 75);
text(17, 580, 'RSI(14) 73.7849', '#000', 68);
text(17, 636, '%R(14) -8.5792', '#000', 66);

// on-chart buttons
function button(x, y, w, h, label, tx, tw, color, fill, border, size) {
    frame(x, y, w, h, fill, border);
    text(tx, y + h / 2 + 5, label, color, tw, 'button-text', size || 13.5);
}
button(213, 109, 74, 19, 'psar OFF', 222, 55, '#f01010', '#696969', '#000');
button(563, 109, 59, 19, 'lab OFF', 568, 46, '#f01010', '#696969', '#000');
button(863, 109, 74, 19, 'HA ON', 879, 41, '#0af00a', '#696969', '#000');
button(863, 129, 64, 19, 'advFo ON', 866, 57, '#0af00a', '#696969', '#000');
button(33, 123, 59, 18, 'HAS', 50, 27, '#fff', '#555', '#888');
el('path', { d: 'M33.5 141V123.500H92', fill: 'none', stroke: '#505050' });
button(33, 179, 59, 19, 'HiLow', 44, 35, '#f01010', '#696969', '#000');
button(34, 210, 48, 16, 'ON/OFF', 40, 38, '#808080', '#dcdcdc', '#ccc', 12);
```
